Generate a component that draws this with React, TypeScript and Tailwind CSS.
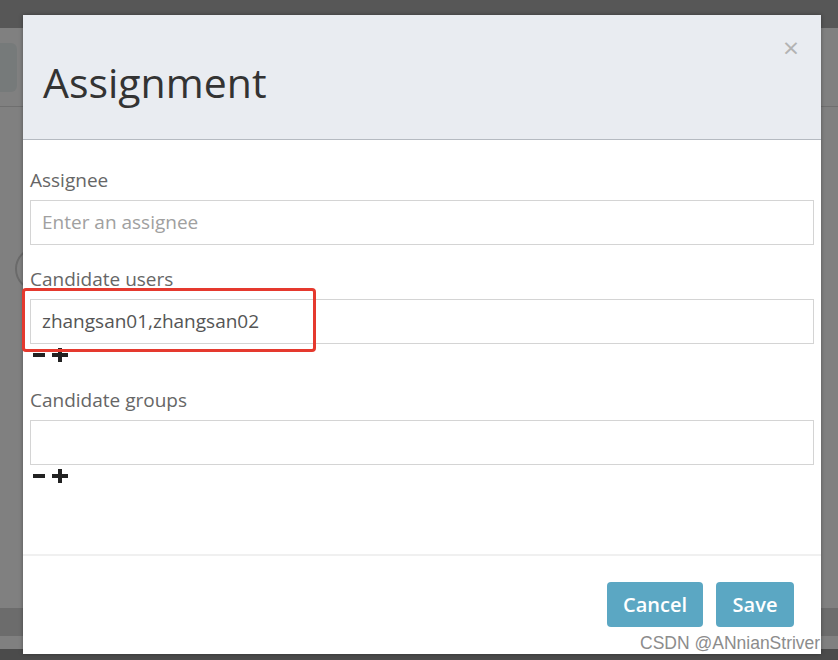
import React from "react";

function MinusPlus() {
  return (
    <div className="flex h-[22px] items-center pl-[2px]">
      <svg width="38" height="14" viewBox="0 0 38 14">
        <rect x="1" y="5" width="12" height="4" fill="#222" />
        <rect x="20" y="5" width="16" height="4" fill="#222" />
        <rect x="26" y="0" width="4" height="14" fill="#222" />
      </svg>
    </div>
  );
}

function Field({ label, value, placeholder, mt }: { label: string; value?: string; placeholder?: string; mt: string }) {
  return (
    <div className={mt}>
      <div className="h-[24px] text-[19px] leading-[24px] text-[#666]">{label}</div>
      <div className="mt-[8px] flex h-[45px] items-center border border-[#d4d4d4] px-[11px] text-[19px]">
        {value ? (
          <span className="text-[#555]">{value}</span>
        ) : placeholder ? (
          <span className="text-[#a0a0a0]">{placeholder}</span>
        ) : null}
      </div>
    </div>
  );
}

export default function App() {
  return (
    <div
      className="relative h-[660px] w-[838px] overflow-hidden bg-[#808080]"
      style={{ fontFamily: '"Open Sans", "Noto Sans", sans-serif' }}
    >
      {/* background page */}
      <div className="h-[28px] bg-[#575757]" />
      <div className="flex h-[79px] items-center border-b border-[#6f6f6f]">
        <div className="ml-[-30px] h-[49px] w-[47px] rounded-[6px] bg-[#767a7a]" />
      </div>
      <div className="ml-[15px] mt-[140px] h-[44px] w-[44px] rounded-full border-2 border-[#6a6a6a]" />
      <div className="mt-[317px] h-[28px] bg-[#6c6c6c]" />
      <div className="mt-[13px] h-[20px] bg-[#4b4b4b]" />

      {/* modal */}
      <div className="absolute left-[23px] top-[15px] flex h-[639px] w-[798px] flex-col bg-white shadow-[0_0_4px_rgba(0,0,0,0.35)]">
        <div className="relative flex h-[125px] items-center border-b border-[#b5bac1] bg-[#e9ecf1] pl-[20px]">
          <h1 className="mt-[12px] text-[41px] font-normal text-[#333]">Assignment</h1>
          <span className="absolute right-[22px] top-[18px] text-[28px] leading-[28px] text-[#b3b3b3]">×</span>
        </div>
        <div className="h-[414px] px-[7px]">
          <Field label="Assignee" placeholder="Enter an assignee" mt="mt-[28px]" />
          <Field label="Candidate users" value="zhangsan01,zhangsan02" mt="mt-[22px]" />
          <MinusPlus />
          <Field label="Candidate groups" mt="mt-[22px]" />
          <MinusPlus />
        </div>
        <div className="flex flex-1 justify-end gap-[13px] border-t-2 border-[#f0f0f0] pr-[27px] pt-[26px]">
          <button className="h-[45px] w-[96px] rounded-[4px] bg-[#5ba7c3] text-[20px] font-semibold text-white">Cancel</button>
          <button className="h-[45px] w-[78px] rounded-[4px] bg-[#5ba7c3] text-[20px] font-semibold text-white">Save</button>
        </div>
      </div>

      {/* annotation */}
      <div className="absolute left-[22px] top-[288px] h-[64px] w-[294px] rounded-[4px] border-[3px] border-[#e5392e]" />
      <div
        className="absolute left-[640px] top-[631px] text-[17.5px] leading-[24px] text-[#8c8c8c]"
        style={{ fontFamily: '"Liberation Sans", Arial, sans-serif' }}
      >
        CSDN @ANnianStriver
      </div>
    </div>
  );
}
